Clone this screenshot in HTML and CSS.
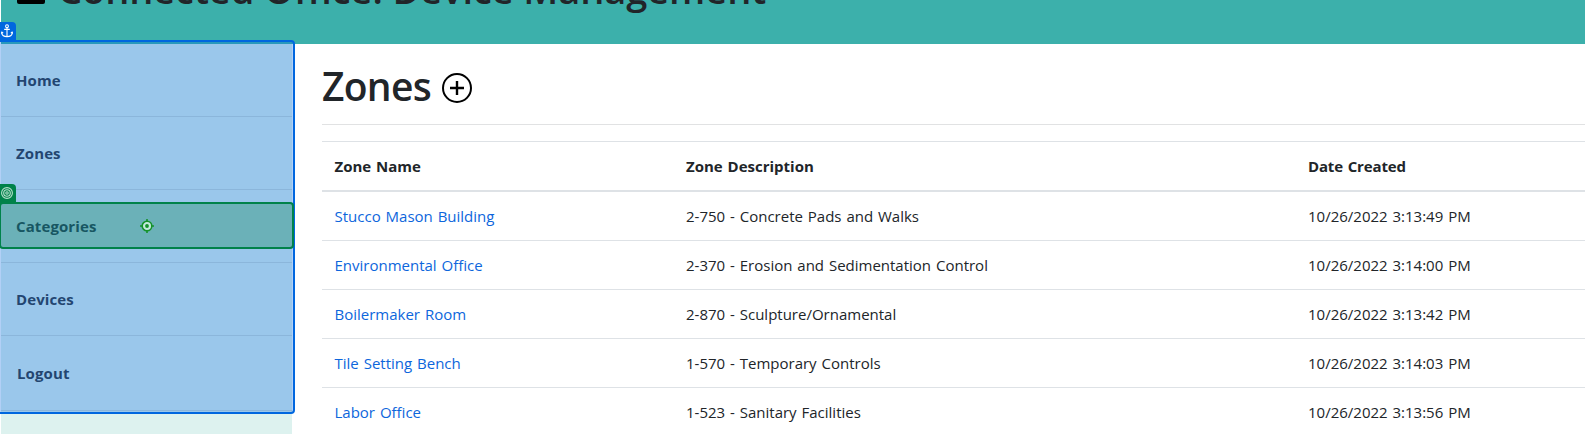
FILE: index.html
```html
<!DOCTYPE html>
<html lang="en">
<head>
<meta charset="utf-8">
<title>Connected Office: Device Management</title>
<link rel="stylesheet" href="styles.css">
</head>
<body>
<header class="banner">
  <span class="menu-icon"></span>
  <h1 class="banner-title">Connected Office: Device Management</h1>
</header>
<div class="layout">
  <nav class="sidebar">
    <a class="nav-item">Home</a>
    <a class="nav-item">Zones</a>
    <a class="nav-item">Categories</a>
    <a class="nav-item">Devices</a>
    <a class="nav-item nav-last">Logout</a>
  </nav>
  <main class="content">
    <div class="heading">
      <h1 class="page-title">Zones</h1>
      <svg class="add-icon" viewBox="0 0 30 30" fill="none" stroke="#000" stroke-width="2"><circle cx="15" cy="15" r="14"/><path d="M15 8v14M8 15h14" stroke-width="2.4"/></svg>
    </div>
    <table class="zones">
      <colgroup><col class="c-name"><col class="c-desc"><col></colgroup>
      <thead><tr><th>Zone Name</th><th>Zone Description</th><th>Date Created</th></tr></thead>
      <tbody>
        <tr><td><a>Stucco Mason Building</a></td><td>2-750 - Concrete Pads and Walks</td><td>10/26/2022 3:13:49 PM</td></tr>
        <tr><td><a>Environmental Office</a></td><td>2-370 - Erosion and Sedimentation Control</td><td>10/26/2022 3:14:00 PM</td></tr>
        <tr><td><a>Boilermaker Room</a></td><td>2-870 - Sculpture/Ornamental</td><td>10/26/2022 3:13:42 PM</td></tr>
        <tr><td><a>Tile Setting Bench</a></td><td>1-570 - Temporary Controls</td><td>10/26/2022 3:14:03 PM</td></tr>
        <tr><td><a>Labor Office</a></td><td>1-523 - Sanitary Facilities</td><td>10/26/2022 3:13:56 PM</td></tr>
      </tbody>
    </table>
  </main>
</div>
<div class="anchor-box"></div>
<div class="tag anchor-tag">
  <svg viewBox="0 0 12 14" fill="none" stroke="#fff" stroke-width="1.1"><circle cx="6" cy="2.2" r="1.4"/><path d="M6 3.6v9M3.2 5.4h5.6M.8 8.2v1.2c.3 2 2.6 3.2 5.2 3.2s4.9-1.2 5.2-3.2V8.2M0 9.4l.9-1.3 1.3 1M12 9.4l-.9-1.3-1.3 1"/></svg>
</div>
<div class="target-box"></div>
<div class="tag target-tag">
  <svg viewBox="0 0 12 14" fill="none" stroke="#b5dfcb" stroke-width="1.1"><circle cx="6" cy="7" r="5.4"/><circle cx="6" cy="7" r="3.3"/><circle cx="6" cy="7" r="1.2"/></svg>
</div>
<svg class="crosshair" viewBox="0 0 14 14"><path d="M7 0v14M0 7h14" stroke="#15922a" stroke-width="1.6"/><circle cx="7" cy="7" r="4.8" fill="#c3e9dc" stroke="#15922a" stroke-width="1.6"/><circle cx="7" cy="7" r="1.9" fill="#15922a"/></svg>
</body>
</html>
```
FILE: styles.css
```css
* { box-sizing: border-box; }
html, body { height: 434px; overflow: hidden; }
body {
  margin: 0;
  padding-left: 1px;
  position: relative;
  background: #fff;
  color: #212529;
  font: 15px/24px "Open Sans", "Noto Sans", sans-serif;
}
.banner {
  height: 44px;
  background: #3cb0ab;
  display: flex;
  align-items: flex-start;
  overflow: hidden;
}
.menu-icon { width: 28px; height: 4px; margin-left: 16px; background: #000; border-radius: 0 0 2px 2px; flex: none; }
.banner-title {
  margin: -35px 0 0 13px;
  font-size: 38px;
  line-height: 48px;
  font-weight: 600;
  letter-spacing: -.07px;
  white-space: nowrap;
}
.layout { display: flex; height: 390px; }
.sidebar { width: 291px; flex: none; background: #ddf2ef; }
.nav-item {
  display: flex;
  align-items: center;
  height: 73px;
  padding-left: 15px;
  border-bottom: 1px solid #c8dad8;
  color: #33393f;
  font-weight: 700;
  letter-spacing: .1px;
}
.nav-last { height: 75px; padding-left: 16px; }
.content { margin-left: 30px; flex: 1; min-width: 0; }
.heading { display: flex; height: 81px; border-bottom: 1px solid #e1e2e3; }
.page-title { margin: 18px 0 0; width: 120px; font-size: 39px; line-height: 48px; font-weight: 600; letter-spacing: -.7px; }
.add-icon { width: 30px; height: 30px; margin-top: 29px; }
.zones { margin-top: 16px; width: 100%; table-layout: fixed; border-collapse: separate; border-spacing: 0; word-spacing: 1px; }
.c-name { width: 352px; }
.c-desc { width: 622px; }
th, td { height: 49px; padding: 0 0 0 12px; border-bottom: 1px solid #dee2e6; text-align: left; white-space: nowrap; }
th { height: 51px; border-top: 1px solid #dee2e6; border-bottom-width: 2px; font-weight: 700; }
th:last-child { letter-spacing: -.15px; }
td:first-child, th:first-child { padding-left: 12.5px; }
td a { color: #0d66dc; }
.anchor-box {
  position: absolute; left: -4px; top: 40px; width: 299px; height: 374px;
  border: 2px solid #0067df; border-radius: 4px;
  background: rgba(0, 100, 226, .3);
}
.target-box {
  position: absolute; left: -1px; top: 202px; width: 295px; height: 47px;
  border: 2px solid #00824a; border-radius: 4px;
  background: rgba(0, 126, 65, .3);
}
.tag { position: absolute; left: 0; width: 16px; height: 19px; padding: 2px 2px 0 1px; border-radius: 0 4px 0 0; }
.tag svg { display: block; width: 12px; height: 14px; }
.anchor-tag { top: 22px; background: #0067df; }
.target-tag { top: 184px; background: #00824a; }
.crosshair { position: absolute; left: 140px; top: 219px; width: 14px; height: 14px; }
```
